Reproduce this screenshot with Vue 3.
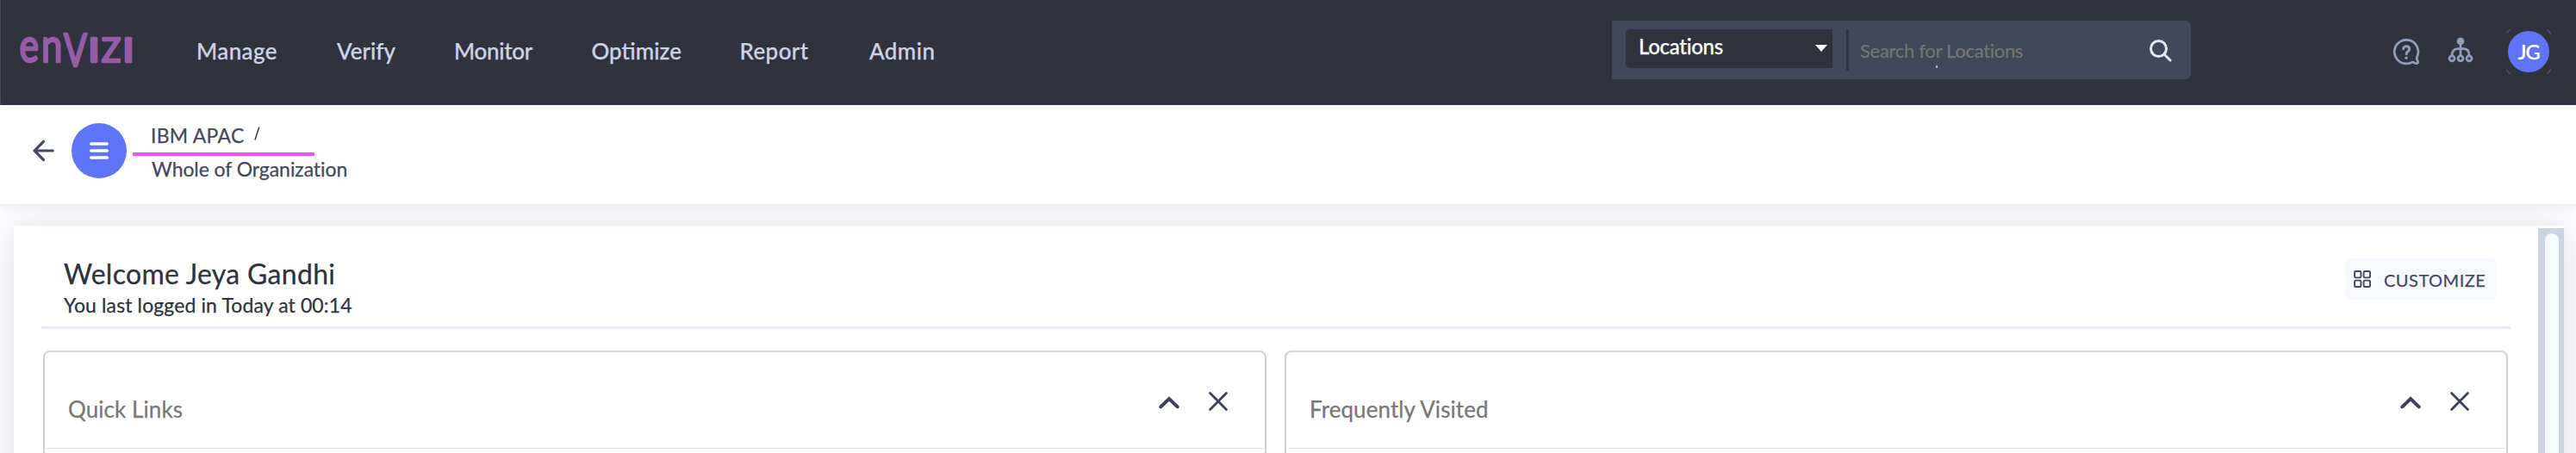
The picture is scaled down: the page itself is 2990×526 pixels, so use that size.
<script setup>
const menu = ['Manage', 'Verify', 'Monitor', 'Optimize', 'Report', 'Admin']
const cards = ['Quick Links', 'Frequently Visited']
</script>

<template>
  <div class="page">
    <header class="topbar">
      <svg class="logo" width="144" height="84" viewBox="0 -16 144 84" role="img" aria-label="envizi">
        <g class="logo-text">
          <text x="1.4" y="43.3" font-size="54" textLength="22.5" lengthAdjust="spacingAndGlyphs">e</text>
          <text x="27" y="43.3" font-size="54" textLength="24.5" lengthAdjust="spacingAndGlyphs">n</text>
          <text x="53" y="47.5" font-size="52" textLength="27" lengthAdjust="spacingAndGlyphs">V</text>
          <text x="80.5" y="43.3" font-size="38.5" textLength="15" lengthAdjust="spacingAndGlyphs">I</text>
          <text x="96.8" y="43.3" font-size="38.5" textLength="22.5" lengthAdjust="spacingAndGlyphs">Z</text>
          <text x="120.5" y="43.3" font-size="38.5" textLength="15" lengthAdjust="spacingAndGlyphs">I</text>
        </g>
      </svg>
      <nav class="menu">
        <a v-for="item in menu" :key="item">{{ item }}</a>
      </nav>
      <div class="search">
        <div class="select">
          <span>Locations</span>
          <svg width="14" height="8" viewBox="0 0 14 8"><path d="M0 0H14L7 8Z" fill="#fff" /></svg>
        </div>
        <div class="divider"></div>
        <span class="placeholder">Search for Locations<i class="dot"></i></span>
        <svg class="lens" width="28" height="28" viewBox="0 0 28 28" fill="none" stroke="#e2e7f1" stroke-width="3" stroke-linecap="round">
          <circle cx="11.5" cy="11.5" r="9" /><path d="M18 18L25 25" />
        </svg>
      </div>
      <div class="tools">
        <svg class="help" width="32" height="32" viewBox="0 0 32 32" fill="none" stroke="#8f9cb9" stroke-width="2.8" stroke-linecap="round" stroke-linejoin="round">
          <path d="M23.2 28.2C21 29.3 18.6 29.9 16 29.9A13.8 13.8 0 1 1 28.4 22.2C27.4 24.6 29.6 26.4 29.6 28.2C29.6 29.4 28.2 29.8 26.6 29.5C25 29.2 24.6 27.6 23.2 28.2Z" />
          <path d="M12.6 12.8C12.6 8.7 19.6 8.7 19.6 13C19.6 15.9 16.1 15.6 16.1 18.8" stroke-width="3" />
          <circle cx="16" cy="23.3" r="1.7" fill="#8f9cb9" stroke="none" />
        </svg>
        <svg class="tree" width="30" height="30" viewBox="0 0 30 30" fill="none" stroke="#8f9cb9" stroke-width="2.8">
          <circle cx="15" cy="5" r="4.4" fill="#8f9cb9" stroke="none" />
          <path d="M15 5V21.5M5 21.5C5 16.5 7.5 13.7 11.5 13.7H18.5C22.5 13.7 25 16.5 25 21.5" />
          <circle cx="5" cy="24.8" r="3" /><circle cx="15" cy="24.8" r="3" /><circle cx="25" cy="24.8" r="3" />
        </svg>
        <div class="avatar-frame">
          <svg class="corners" width="52" height="52" viewBox="0 0 52 52" fill="none" stroke="#777985" stroke-width="0.8">
            <path d="M.5 4.5Q2 2 4.5 .5M47.5 .5Q50 2 51.5 5.5M.5 47Q2 50 4.5 51.5M47.5 51.5Q50 50 51.5 46.5" />
          </svg>
          <div class="avatar">JG</div>
        </div>
      </div>
    </header>

    <section class="crumbs">
      <svg class="back" width="28" height="28" viewBox="0 0 28 28" fill="none" stroke="#434860" stroke-width="3.2" stroke-linecap="round" stroke-linejoin="round">
        <path d="M24.3 14H3M13.5 3.3L3 14L13.5 24.7" />
      </svg>
      <div class="burger">
        <svg width="22" height="20" viewBox="0 0 22 20" fill="none" stroke="#fff" stroke-width="3.4" stroke-linecap="round">
          <path d="M1.7 2H20.3M1.7 10H20.3M1.7 18H20.3" />
        </svg>
      </div>
      <div class="trail">
        <div class="parent"><span>IBM APAC</span><svg width="7" height="16" viewBox="0 0 7 16"><path d="M1 15.5L5.8 .5" stroke="#30323d" stroke-width="1.4" /></svg></div>
        <div class="underline"></div>
        <div class="current">Whole of Organization</div>
      </div>
    </section>

    <main class="panel">
      <div class="content">
        <div class="welcome">
          <div>
            <h1>Welcome Jeya Gandhi</h1>
            <p>You last logged in Today at 00:14</p>
          </div>
          <button class="customize">
            <svg width="20" height="20" viewBox="0 0 20 20" fill="none" stroke="#434860" stroke-width="1.9">
              <rect x="1" y="1" width="7.4" height="7.4" rx="1.3" /><rect x="11.6" y="1" width="7.4" height="7.4" rx="1.3" />
              <rect x="1" y="11.6" width="7.4" height="7.4" rx="1.3" /><rect x="11.6" y="11.6" width="7.4" height="7.4" rx="1.3" />
            </svg>
            <span>CUSTOMIZE</span>
          </button>
        </div>
        <div class="cards">
          <article v-for="title in cards" :key="title" class="card">
            <div class="card-head">
              <h2>{{ title }}</h2>
              <svg class="chevron" width="24" height="15" viewBox="0 0 24 15" fill="none" stroke="#3c4259" stroke-width="4" stroke-linecap="round">
                <path d="M2.3 12.4L12 3L21.7 12.4" />
              </svg>
              <svg class="close" width="22" height="22" viewBox="0 0 22 22" fill="none" stroke="#3c4259" stroke-width="2.8" stroke-linecap="round">
                <path d="M1.6 1.6L20.4 20.4M20.4 1.6L1.6 20.4" />
              </svg>
            </div>
          </article>
        </div>
      </div>
      <div class="scrollbar"><div class="thumb"></div></div>
    </main>
  </div>
</template>

<style>
body { margin: 0; overflow: hidden; }
</style>

<style scoped>
.page {
  box-sizing: border-box;
  width: 2990px;
  height: 526px;
  overflow: hidden;
  background: #fdfdff;
  font-family: Lato, "Open Sans", sans-serif;
  -webkit-text-stroke: 0.25px currentColor;
  display: flex;
  flex-direction: column;
}
svg { display: block; flex: none; }

.topbar {
  height: 122px;
  flex: none;
  box-sizing: border-box;
  background: #30323e;
  border-left: 1px solid #474a58;
  display: flex;
  align-items: flex-start;
}
.logo { margin: 13px 0 0 20px; }
.logo-text {
  font-family: Lato, sans-serif;
  font-weight: 400;
  fill: #965ca5;
  stroke: #965ca5;
  stroke-width: 2.4px;
  stroke-linejoin: round;
  -webkit-text-stroke: 2.4px #965ca5;
}
.menu {
  margin: 43px 0 0 63px;
  display: grid;
  grid-template-columns: 163px 136px 159.5px 172px 150.5px 90px;
  font-size: 26px;
  line-height: 33px;
  font-weight: 500;
  color: #ccd3e4;
}
.menu a:nth-child(1) { letter-spacing: 0.4px; }
.menu a:nth-child(3) { letter-spacing: -0.3px; }
.menu a:nth-child(n + 5) { letter-spacing: 0.4px; }

.search {
  margin: 24px 0 0 772px;
  width: 672px;
  height: 68px;
  border-radius: 0 6px 6px 0;
  background: #43475a;
  display: flex;
  align-items: flex-start;
}
.select {
  margin: 10px 0 0 16px;
  width: 240px;
  height: 45px;
  box-sizing: border-box;
  padding: 0 6px 0 15px;
  border-radius: 5px 0 0 5px;
  background: #30323e;
  color: #fff;
  font-size: 24px;
  line-height: 39px;
  font-weight: 500;
  letter-spacing: -0.3px;
  display: flex;
  justify-content: space-between;
}
.select svg { margin-top: 18px; }
.divider { width: 3px; height: 48px; margin: 10px 0 0 16px; background: #30323e; }
.placeholder {
  position: relative;
  margin: 20px 0 0 13px;
  width: 335px;
  white-space: nowrap;
  color: #757575;
  font-size: 22px;
  line-height: 30px;
  letter-spacing: -0.3px;
}
.dot { position: absolute; left: 88px; top: 32px; width: 2px; height: 3px; background: #b4b7c0; }
.lens { margin: 21px 0 0 0; }

.tools { margin-left: auto; display: flex; align-items: flex-start; padding-right: 29px; }
.help { margin: 44px 32px 0 0; }
.tree { margin: 43px 38px 0 0; }
.avatar-frame { position: relative; width: 52px; height: 52px; margin-top: 34px; }
.corners { position: absolute; left: 0; top: 0; }
.avatar {
  margin: 2px;
  width: 48px;
  height: 48px;
  border-radius: 50%;
  background: #6074f8;
  color: #fff;
  text-align: center;
  font-size: 23.5px;
  line-height: 48px;
  font-weight: 500;
  letter-spacing: -1px;
}

.crumbs {
  position: relative;
  height: 115px;
  flex: none;
  background: #fff;
  box-shadow: 0 2px 12px rgba(60, 60, 100, 0.1);
  display: flex;
  align-items: flex-start;
  color: #434860;
  font-size: 23px;
  z-index: 1;
}
.back { margin: 39px 18px 0 37px; }
.burger {
  width: 64px;
  height: 64px;
  margin-top: 21px;
  border-radius: 50%;
  background: #6074f8;
  display: flex;
  align-items: center;
  justify-content: center;
}
.trail { margin: 19px 0 0 7px; }
.parent {
  padding-left: 21px;
  height: 36px;
  line-height: 29px;
  display: flex;
  letter-spacing: 0.25px;
}
.parent span { margin-top: 2px; }
.parent svg { margin: 6px 0 0 11px; }
.underline { width: 211px; height: 4px; background: #ee50f7; }
.current { padding: 1px 0 0 22px; line-height: 28px; letter-spacing: -0.07px; }

.panel {
  margin: 25px 14px 0 16px;
  height: 600px;
  flex: none;
  background: #fff;
  box-shadow: 0 0 40px rgba(50, 50, 70, 0.13);
  display: flex;
}
.content { width: 2866px; margin-left: 32px; }
.welcome {
  height: 117px;
  border-bottom: 3px solid #e6eaf6;
  padding: 0 16px 0 26px;
  display: flex;
  justify-content: space-between;
  align-items: flex-start;
  color: #30323a;
}
.welcome h1 { margin: 38px 0 0; font-size: 32px; line-height: 36px; font-weight: 400; letter-spacing: 0.3px; }
.welcome p { margin: 3px 0 0; font-size: 23px; line-height: 30px; letter-spacing: 0.12px; }
.customize {
  margin: 38px 0 0;
  width: 176px;
  height: 48px;
  padding: 0 0 0 10px;
  border: 0;
  border-radius: 6px;
  background: #f8f9ff;
  display: flex;
  align-items: center;
  gap: 15px;
  font-family: inherit;
  font-size: 20px;
  line-height: 24px;
  letter-spacing: 0.5px;
  color: #434860;
}
.customize span { padding-top: 1px; }
.cards { margin: 25px 3px 0 2px; display: grid; grid-template-columns: 1420px 1420px; justify-content: space-between; }
.card {
  box-sizing: border-box;
  height: 300px;
  border: 2px solid #cfcfcf;
  border-top-color: #d6d6d6;
  border-radius: 8px;
  background: #fff;
}
.card-head {
  height: 111px;
  margin: 0 2px;
  border-bottom: 1px solid #e0e2f0;
  display: flex;
  align-items: flex-start;
  padding: 0 41px 0 25px;
}
.card-head h2 {
  margin: 49px auto 0 0;
  font-size: 26px;
  line-height: 34px;
  font-weight: 400;
  letter-spacing: 0.08px;
  color: #777;
}
.chevron { margin: 51px 34px 0 0; }
.close { margin-top: 46px; }

.scrollbar { width: 30px; margin: 3px 0 0 auto; background: #cdd3e1; }
.thumb { width: 16px; height: 500px; margin: 6px 0 0 8px; border-radius: 8px; background: #f8f9ff; }
</style>
